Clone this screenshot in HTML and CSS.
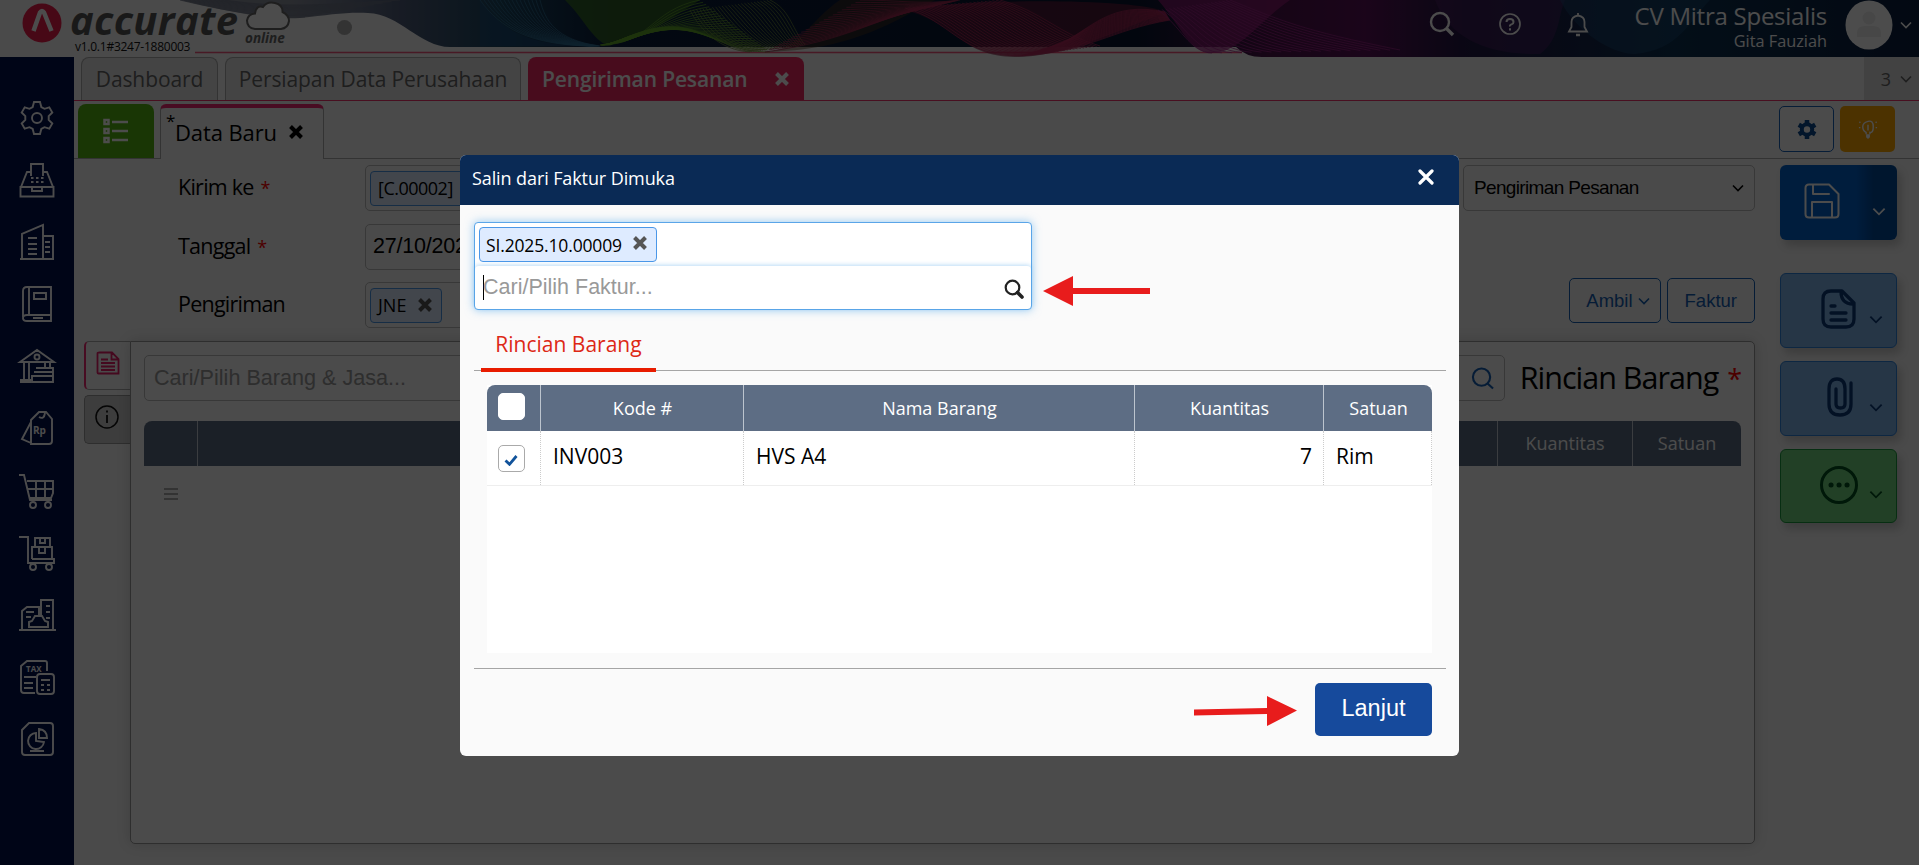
FILE: index.html
```html
<!DOCTYPE html>
<html lang="id">

<head>
  <meta charset="UTF-8" />
  <title>Accurate Online</title>
  <meta name="viewport" content="width=device-width, initial-scale=1.0" />
  <link rel="stylesheet" href="styles.css">
</head>

<body>
  <svg class="sprite" aria-hidden="true">
    <symbol id="i-x" viewBox="0 0 16 16"><path d="M2.5 2.5l11 11M13.5 2.5l-11 11" fill="none" stroke="currentColor" stroke-width="4" /></symbol>
    <symbol id="i-down" viewBox="0 0 12 8"><path d="M1 1.5l5 5 5-5" fill="none" stroke="currentColor" stroke-width="1.6" /></symbol>
  </svg>

  <header class="topbar">
    <svg class="banner" id="banner" viewBox="0 0 1919 57" preserveAspectRatio="none">
      <defs>
        <linearGradient id="sky" gradientUnits="userSpaceOnUse" x1="290" x2="1919" y1="0" y2="0">
          <stop offset="0" stop-color="#8b8f9c" />
          <stop offset=".07" stop-color="#4d5b78" />
          <stop offset=".13" stop-color="#1b4660" />
          <stop offset=".2" stop-color="#0a1c3c" />
          <stop offset=".52" stop-color="#081630" />
          <stop offset=".6" stop-color="#4a1148" />
          <stop offset=".66" stop-color="#5a1258" />
          <stop offset=".72" stop-color="#221743" />
          <stop offset=".85" stop-color="#0b3050" />
          <stop offset="1" stop-color="#0c1e3f" />
        </linearGradient>
      </defs>
      <path fill="url(#sky)" d="M180 0C230 12 270 20 300 18C330 15 345 12 368 13C400 14 420 47 450 47H1236Q1246 57 1262 57H1919V0z" />
      <path d="M195 52.5H1242" stroke="#f0567e" stroke-width="1.6" fill="none" />
      <path fill="#1b4b7a" opacity=".6" d="M480 0C500 30 530 46 590 46H480z" />
      <path fill="#3f7d1c" opacity=".65" d="M565 0C585 20 590 36 606 45C640 40 660 25 700 0z" />
      <path fill="#57361c" opacity=".45" d="M840 0C810 20 800 50 765 52C850 50 890 24 935 0z" />
      <path fill="#7a1b3e" opacity=".6" d="M905 10C960 25 960 56 1015 57C1060 57 1110 35 1165 12C1140 -2 960 -2 905 10z" />
      <path fill="#951c78" opacity=".7" d="M1158 0C1180 25 1190 53 1212 53C1240 53 1260 20 1290 0z" />
      <path fill="#5a2470" opacity=".4" d="M1435 0C1450 40 1490 55 1540 54C1560 40 1558 15 1565 0z" />
      <path fill="#1c4f7c" opacity=".45" d="M1560 0C1575 30 1610 54 1635 54C1680 50 1690 20 1710 0z" />
    </svg>

    <div class="brand">
      <svg class="brand-mark" viewBox="0 0 40 40">
        <circle cx="20" cy="20" r="19.5" fill="#ee1c4a" />
        <path d="M11.5 28L18 9.500q2-3 4 0L29.500 28" fill="none" stroke="#fff" stroke-width="4.500" />
      </svg>
      <div class="brand-name">accurate<div class="version">v1.0.1#3247-1880003</div></div>
      <div class="brand-cloud">
        <svg viewBox="0 0 46 30"><path d="M10 28Q2 27 2 19.500Q3 13 10 12.500Q11 4 18 6Q22 0 30 2Q38 4 37.500 11Q44 14 44 20Q43 27 36 28z" fill="#fff" stroke="#666" stroke-width="2" /></svg>
        <span>online</span>
      </div>
      <i class="dot"></i>
    </div>

    <div class="top-actions">
      <svg viewBox="0 0 26 26"><circle cx="11" cy="11" r="9" /><path d="M17.500 17.500L24 24" stroke-width="3.400" /></svg>
      <svg viewBox="0 0 26 26"><circle cx="13" cy="13" r="10" stroke-width="1.700" /><path d="M9.500 11Q9.500 8 13 8T16.500 11Q16.500 12.800 14.500 13.400T13 15.500M13 17.200v2.200" stroke-width="2" /></svg>
      <svg viewBox="0 0 26 26"><path d="M4 20.500h18L19.500 16V11Q19.500 5.500 13 4.500Q6.500 5.500 6.500 11v5zM13 2v3" stroke-width="1.800" /><path d="M11 24h4" stroke-width="2.500" /></svg>
    </div>
    <div class="account">
      <div class="company">CV Mitra Spesialis</div>
      <div class="user">Gita Fauziah</div>
    </div>
    <svg class="avatar" viewBox="0 0 48 50"><ellipse cx="24" cy="25" rx="23.500" ry="24.500" fill="#fff" /><circle cx="24" cy="18" r="6.500" fill="#eee" /><path d="M12 37V33Q12 26 20 26h8Q36 26 36 33v4z" fill="#eee" /></svg>
    <svg class="caret light"><use href="#i-down" /></svg>
  </header>

  <div class="shell">
    <nav class="sidebar">
      <!-- pengaturan -->
      <svg viewBox="0 0 36 36"><path d="M15 2h6l1.300 5 3.200 1.800 4.800-1.500 3 5.200-3.600 3.600v3.800l3.600 3.600-3 5.200-4.800-1.500-3.200 1.800L21 34h-6l-1.300-5-3.200-1.800-4.800 1.500-3-5.200 3.600-3.600v-3.800L2.700 12.500l3-5.200 4.800 1.500L13.700 7z" /><circle cx="18" cy="18" r="5" /></svg>
      <!-- kas -->
      <svg viewBox="0 0 36 36"><path d="M12 14V2h12v12M12 10H8L2 25h32L28 10h-4M1.500 25h33v9.500h-33zM13 25v4h10v-4" /><path d="M12 16h13M12 20h13" stroke-dasharray="2.500 2.500" /></svg>
      <!-- perusahaan -->
      <svg viewBox="0 0 36 36"><path d="M1 35h34M3 35V10L24 1v34M24 12h10v23M9 14h9M9 20h9M9 25h9M9 30h9M26 18h5M26 23h5M26 28h5" /></svg>
      <!-- buku besar -->
      <svg viewBox="0 0 36 36"><path d="M32 29V1H8Q4 1 4 5v26M10 1v28M32 29H8Q4 29 4 32T8 35h24zM15 7h12v6H15zM14 32h10" /></svg>
      <!-- bank -->
      <svg viewBox="0 0 36 36"><path d="M1 14L18 2l17 12zM5 15v17M10 15v17M26 15v5M31 15v5M1 34h11M1 32h11M17 20h17v5M15 24h19v5M13 28h21v6H13z" /><circle cx="18" cy="9" r="2.500" /></svg>
      <!-- penjualan -->
      <svg viewBox="0 0 36 36"><path d="M12 10L20 2h7l6 7v22q0 3-3 3H12zM12 12L3 29l9 4M20 7q5 3 6-4" /><text x="14" y="24">Rp</text></svg>
      <!-- pembelian -->
      <svg viewBox="0 0 36 36"><path d="M0 2h5l6 25h22M8 8h26v12l-2 5H11M8.500 16H34M17 8v17M26 8v17" /><circle cx="14" cy="32" r="3" /><circle cx="29" cy="32" r="3" /></svg>
      <!-- persediaan -->
      <svg viewBox="0 0 36 36"><path d="M0 2h9v26h26v-4H13M13 24V12h20v12M16 12V3h15v9M21 3v5h5V3M20 12v6h6v-6" /><circle cx="14" cy="32" r="3" /><circle cx="30" cy="32" r="3" /></svg>
      <!-- aset tetap -->
      <svg viewBox="0 0 36 36"><path d="M0 33h37M3 33V14l5-4h12v10M22 20V3h12v30M7 15h8M7 20h5M27 9h4M27 15h4M27 21h4" /><path d="M10 30v-5l3-1 3-5h7l3 5 3 1v5z" /></svg>
      <!-- pajak -->
      <svg viewBox="0 0 36 36"><path d="M16 34H5q-3 0-3-3V7l6-5h18q2 0 2 2v8M5 18h12M5 24h9M5 29h9" /><rect x="18" y="15" width="17" height="20" rx="3" /><path d="M22 21h9M22 26h3M28 26h3M22 31h3M28 31h3" /><text x="7" y="13" font-size="7">TAX</text></svg>
      <!-- laporan -->
      <svg viewBox="0 0 36 36"><path d="M10 2h21q3 0 3 3v26q0 3-3 3H6q-3 0-3-3V9zM11 30h14M17 12a8 8 0 1 0 8 9l-8-1zM20 8v9h8q0-8-8-9z" /></svg>
    </nav>

    <main class="main">
      <div class="tabs">
        <div class="tab">Dashboard</div>
        <div class="tab wide">Persiapan Data Perusahaan</div>
        <div class="tab active"><span>Pengiriman Pesanan</span><svg class="x"><use href="#i-x" /></svg></div>
        <div class="tab-count">3<svg class="caret"><use href="#i-down" /></svg></div>
      </div>

      <div class="subtabs">
        <button class="list-btn"><svg viewBox="0 0 26 26"><path d="M1.500 2h4v4h-4zM1.500 11h4v4h-4zM1.500 20h4v4h-4zM9 4h16M9 13h16M9 22h16" /></svg></button>
        <div class="subtab"><sup>*</sup><span>Data Baru</span><svg class="x"><use href="#i-x" /></svg></div>
        <div class="subtab-tools">
          <button class="tool"><svg viewBox="0 0 20 20"><circle cx="10" cy="10" r="5.200" fill="none" stroke="#0a4a92" stroke-width="4" /><path d="M10 .5v4M10 15.500v4M1.800 5.200l3.400 2M14.800 12.800l3.400 2M1.800 14.800l3.400-2M14.800 7.200l3.400-2" stroke="#0a4a92" stroke-width="4.500" /></svg></button>
          <button class="tool tip"><svg viewBox="0 0 20 22"><path d="M8 16v-2Q4.500 12 4.500 8T10 2.500T15.500 8T12 14v2M10 6v6M1 3l1 1M19 3l-1 1M.5 9h1.500M18 9h1.500" fill="none" stroke="#fff" stroke-width="1.500" /><path d="M8 16h4v3l-2 2-2-2z" fill="#fff" /></svg></button>
        </div>
      </div>

      <div class="content">
        <div class="form-side">
          <div class="form">
            <div class="fields">
              <label>Kirim ke <b>*</b></label>
              <div class="field"><span class="chip customer">[C.00002]</span></div>
              <label>Tanggal <b>*</b></label>
              <div class="field date">27/10/2025</div>
              <label>Pengiriman</label>
              <div class="field"><span class="chip">JNE <svg class="x"><use href="#i-x" /></svg></span></div>
            </div>
            <div class="form-right">
              <div class="select">Pengiriman Pesanan<svg class="caret"><use href="#i-down" /></svg></div>
              <div class="form-buttons">
                <button>Ambil<svg class="caret"><use href="#i-down" /></svg></button>
                <button class="faktur">Faktur</button>
              </div>
            </div>
          </div>

          <div class="detail">
            <div class="side-tabs">
              <div class="side-tab active"><svg viewBox="0 0 24 24"><path d="M3.500 1.500H16l6.500 6.500v14.500h-20q-1 0-1-1v-19q0-1 2-1zM15.500 2v6.500H22M5 8.500h7M5 12h14M5 15.500h14M5 19h14" /></svg></div>
              <div class="side-tab"><svg viewBox="0 0 24 24"><circle cx="12" cy="12" r="11" /><path d="M12 10v8M12 5.500v2" stroke-width="1.800" /></svg></div>
            </div>
            <div class="card">
              <div class="card-head">
                <div class="item-search">
                  <span>Cari/Pilih Barang &amp; Jasa...</span>
                  <svg viewBox="0 0 24 24"><circle cx="11" cy="10.500" r="9" /><path d="M17 17l6 5.500" /></svg>
                </div>
                <h2>Rincian Barang <b>*</b></h2>
              </div>
              <div class="items-head"><div></div><div></div><div>Kuantitas</div><div>Satuan</div></div>
              <div class="grip"><i></i><i></i><i></i></div>
            </div>
          </div>
        </div>

        <aside class="actions">
          <div class="action save">
            <svg class="icon" viewBox="0 0 36 36"><path d="M5 1.500h20L34.500 11v20q0 3.500-3.500 3.500H5q-3.500 0-3.500-3.500V5q0-3.500 3.500-3.500zM9 2v9h16M8 34V19h20v15" /></svg>
            <svg class="caret"><use href="#i-down" /></svg>
          </div>
          <div class="action">
            <svg class="icon" viewBox="0 0 36 40"><path d="M10 2h11l12 12v16q0 8-8 8H10q-8 0-8-8V10q0-8 8-8zM20 2.500Q20 15 32 15M10 17h4M10 24h15M10 31h15" /></svg>
            <svg class="caret"><use href="#i-down" /></svg>
          </div>
          <div class="action">
            <svg class="icon" viewBox="0 0 36 40"><path d="M30 6v21q0 11-11 11T8 27V12q0-10 8-10t8 10v15q0 4-4.500 4T15 27V12" /></svg>
            <svg class="caret"><use href="#i-down" /></svg>
          </div>
          <div class="action more">
            <svg class="icon" viewBox="0 0 40 40"><circle cx="20" cy="20" r="17.500" /><path d="M12 20h.1M20 20h.1M28 20h.1" stroke-width="5" /></svg>
            <svg class="caret"><use href="#i-down" /></svg>
          </div>
        </aside>
      </div>
    </main>
  </div>

  <div class="overlay">
    <div class="modal">
      <div class="modal-head">
        <span>Salin dari Faktur Dimuka</span>
        <svg viewBox="0 0 16 16"><path d="M2 2l12 12M14 2L2 14" stroke="#fff" stroke-width="3.200" stroke-linecap="round" /></svg>
      </div>
      <div class="modal-body">
        <div class="invoice-box">
          <div class="picked"><span class="chip">SI.2025.10.00009<svg class="x"><use href="#i-x" /></svg></span></div>
          <div class="invoice-search">
            <i class="cursor"></i><span>Cari/Pilih Faktur...</span>
            <svg viewBox="0 0 20 20"><circle cx="8.500" cy="8.500" r="6.800" stroke-width="2.200" /><path d="M13.500 13.500l4.500 4.500" stroke-width="3.600" stroke-linecap="round" /></svg>
          </div>
        </div>

        <div class="modal-tabs"><div class="modal-tab">Rincian Barang</div></div>

        <div class="grid">
          <div class="grid-row grid-head">
            <div><i class="check"></i></div>
            <div>Kode #</div>
            <div>Nama Barang</div>
            <div>Kuantitas</div>
            <div>Satuan</div>
          </div>
          <div class="grid-row">
            <div><i class="check"><svg viewBox="0 0 14 12"><path d="M1.500 6.500l4 3.800L12.500 2" fill="none" stroke="#11539b" stroke-width="2.800" /></svg></i></div>
            <div>INV003</div>
            <div>HVS A4</div>
            <div class="num">7</div>
            <div>Rim</div>
          </div>
        </div>

        <div class="modal-foot"><button class="next">Lanjut</button></div>
      </div>
      <svg class="arrow arrow-search" viewBox="0 0 107 30"><path d="M0 15L30 0V12H107V18H30V30z" /></svg>
      <svg class="arrow arrow-next" viewBox="0 0 103 30"><path d="M0 13.500L73 12V0L103 14.500L73 30V18L0 19.500z" /></svg>
    </div>
  </div>

  <script>
    // hairline ribbons of the header: each one fans from curve a to curve b
    const ribbons = [
      { color: '#6d7385', n: 12, a: [180, 0, 230, 12, 270, 18, 305, 17], b: [225, 0, 260, 5, 290, 8, 400, 0] },
      { color: '#2f6f96', n: 16, a: [480, 0, 500, 28, 530, 45, 590, 46], b: [540, 0, 545, 20, 555, 40, 600, 46] },
      { color: '#63a82b', n: 24, a: [600, 45, 650, 45, 650, 10, 700, 0], b: [610, 45, 700, 0, 700, 52, 770, 52] },
      { color: '#6f8a3c', n: 26, a: [690, 10, 700, 30, 720, 50, 750, 52], b: [770, 0, 790, 10, 790, 25, 805, 45] },
      { color: '#a02a52', n: 22, a: [765, 52, 850, 40, 870, 20, 925, 8], b: [860, 0, 900, 0, 920, 5, 960, 0] },
      { color: '#b0295a', n: 26, a: [905, 8, 950, 20, 960, 56, 1020, 56], b: [1000, 0, 1040, 10, 1060, 35, 1100, 46] },
      { color: '#b0295a', n: 22, a: [1060, 44, 1090, 30, 1110, 0, 1165, 12], b: [1020, 56, 1090, 52, 1110, 30, 1170, 20] },
      { color: '#a0248a', n: 20, a: [1158, 10, 1180, 25, 1190, 53, 1212, 53], b: [1230, 0, 1280, 20, 1300, 30, 1400, 50] },
    ];
    const banner = document.getElementById('banner');
    ribbons.forEach(r => {
      let d = '';
      for (let i = 0; i < r.n; i++) {
        const p = r.a.map((v, k) => (v + (r.b[k] - v) * i / (r.n - 1)).toFixed(1));
        d += `M${p[0]} ${p[1]}C${p.slice(2).join(' ')}`;
      }
      const path = document.createElementNS('http://www.w3.org/2000/svg', 'path');
      path.setAttribute('d', d);
      path.setAttribute('fill', 'none');
      path.setAttribute('stroke', r.color);
      path.setAttribute('stroke-width', '.9');
      path.setAttribute('opacity', '.8');
      banner.appendChild(path);
    });
  </script>
</body>

</html>
```

FILE: styles.css
```css
* {
  box-sizing: border-box;
}

body {
  margin: 0;
  height: 865px;
  overflow: hidden;
  background: #f7f7f7;
  color: #000;
  font-family: "Open Sans", "Noto Sans", sans-serif;
  font-size: 20px;
}

button {
  font-family: "Liberation Sans", Arial, sans-serif;
  cursor: pointer;
}

svg {
  display: block;
  flex: none;
}

.sprite {
  position: absolute;
  width: 0;
  height: 0;
}

.x {
  width: 16px;
  height: 16px;
}

.caret {
  width: 12px;
  height: 8px;
}

/* header */
.topbar {
  position: relative;
  display: flex;
  align-items: flex-start;
  height: 57px;
}

.banner {
  position: absolute;
  top: 0;
  left: 0;
  width: 100%;
  height: 57px;
}

.brand {
  position: relative;
  display: flex;
  flex: 1;
  padding-left: 22px;
}

.brand-mark {
  width: 40px;
  height: 40px;
  margin-top: 3px;
}

.brand-name {
  width: 174px;
  margin-left: 8px;
  color: #555;
  font-size: 40px;
  font-style: italic;
  font-weight: 700;
  line-height: 39px;
  letter-spacing: 0.3px;
}

.version {
  margin-left: 5px;
  color: #111;
  font-size: 12px;
  font-style: normal;
  font-weight: 400;
  line-height: 15px;
  letter-spacing: -0.25px;
}

.brand-cloud {
  width: 46px;
  margin-left: 1px;
  color: #666;
  font-size: 13.5px;
  font-style: italic;
  font-weight: 700;
  line-height: 15px;
}

.brand-cloud svg {
  width: 46px;
  height: 30px;
  margin-top: 1px;
}

.brand-cloud span {
  display: block;
}

.dot {
  width: 15px;
  height: 15px;
  margin: 20px 0 0 46px;
  border-radius: 50%;
  background: #aaa;
}

.top-actions {
  position: relative;
  display: flex;
  gap: 42px;
  margin: 11px 44px 0 0;
}

.top-actions svg {
  width: 26px;
  height: 26px;
  fill: none;
  stroke: #fff;
  stroke-width: 2.4;
}

.account {
  position: relative;
  color: #fff;
  text-align: right;
}

.company {
  font-size: 24px;
  line-height: 32px;
  letter-spacing: -0.25px;
}

.user {
  font-size: 16.3px;
  line-height: 18px;
}

.avatar {
  position: relative;
  width: 48px;
  height: 50px;
  margin-left: 18px;
}

.light {
  position: relative;
  margin: 21px 7px 0 7px;
  color: #fff;
}

/* shell */
.shell {
  display: flex;
  height: 808px;
}

.sidebar {
  display: flex;
  flex-direction: column;
  align-items: center;
  gap: 26.1px;
  width: 74px;
  padding-top: 43px;
  background: #00124f;
}

.sidebar svg {
  width: 36px;
  height: 36px;
  fill: none;
  stroke: #fff;
  stroke-width: 1.9;
  overflow: visible;
}

.sidebar text {
  fill: #fff;
  stroke: none;
  font-size: 10px;
  font-weight: 700;
}

.sidebar text[font-size] {
  font-size: 8px;
}

.main {
  flex: 1;
  min-width: 0;
}

.tabs {
  display: flex;
  align-items: stretch;
  height: 44px;
  padding-left: 7px;
  border-bottom: 1px solid #f0356c;
}

.tab {
  width: 137px;
  margin-right: 7px;
  border: 1px solid #aaa;
  border-bottom: 0;
  border-radius: 8px 8px 0 0;
  background: #e4e4e4;
  color: #666;
  font-size: 21px;
  line-height: 42px;
  letter-spacing: -0.1px;
  text-align: center;
}

.tab.wide {
  width: 296px;
}

.tab.active {
  display: flex;
  align-items: center;
  justify-content: space-between;
  width: 276px;
  padding: 1px 14px 0;
  border: 0;
  background: #f22a62;
  color: #fff;
  font-weight: 600;
  letter-spacing: -0.15px;
}

.tab-count {
  display: flex;
  align-items: center;
  justify-content: flex-end;
  gap: 9px;
  width: 55px;
  margin-left: auto;
  padding-right: 7px;
  background: #ddd;
  color: #666;
  font-size: 18px;
}

.subtabs {
  display: flex;
  height: 58px;
  padding: 3px 0 0 4px;
  border-bottom: 1px solid #aaa;
}

.list-btn {
  display: flex;
  align-items: center;
  justify-content: center;
  width: 76px;
  height: 54px;
  border: 0;
  border-radius: 8px 8px 0 0;
  background: #55b511;
}

.list-btn svg {
  width: 26px;
  height: 26px;
  fill: none;
  stroke: #fff;
  stroke-width: 2.5;
}

.subtab {
  display: flex;
  align-items: center;
  width: 164px;
  height: 55px;
  margin-left: 6px;
  padding: 0 0 3px 5px;
  border: 1px solid #aaa;
  border-top: 4px solid #f22a72;
  border-bottom: 0;
  border-radius: 6px 6px 0 0;
  background: #f7f7f7;
  font-size: 22px;
}

.subtab sup {
  align-self: flex-start;
  width: 9px;
  font-size: 17px;
  line-height: 25px;
}

.subtab span {
  width: 113px;
  letter-spacing: -0.1px;
}

.subtab-tools {
  display: flex;
  gap: 6px;
  margin: 2px 24px 0 auto;
}

.tool {
  display: flex;
  align-items: center;
  justify-content: center;
  width: 55px;
  height: 46px;
  border: 1px solid #1a62b8;
  border-radius: 5px;
  background: #fafafa;
}

.tool svg {
  width: 20px;
  height: 21px;
}

.tool.tip {
  border: 0;
  background: #ffa800;
}

/* form */
.content {
  display: flex;
  padding: 6px 22px 0 10px;
}

.form-side {
  width: 1671px;
}

.form {
  display: flex;
  justify-content: space-between;
}

.fields {
  display: grid;
  grid-template-columns: 187px 500px;
  grid-template-rows: 46px 46px 46px;
  row-gap: 12.5px;
  padding-left: 94px;
}

.fields label {
  font-size: 21.5px;
  line-height: 44px;
  letter-spacing: -0.75px;
}

b {
  color: #f00;
  font-weight: 400;
}

.fields b {
  margin-left: 2px;
  font-size: 18px;
}

.field {
  display: flex;
  align-items: center;
  padding-left: 4px;
  border: 1px solid #bbb;
  border-radius: 5px;
}

.date {
  padding-left: 7px;
  font-family: "Liberation Sans", Arial, sans-serif;
  font-size: 21.5px;
  letter-spacing: -0.2px;
}

.chip {
  display: flex;
  align-items: center;
  gap: 10px;
  height: 35px;
  padding: 0 8px 0 7px;
  border: 1px solid #4a97e8;
  border-radius: 4px;
  background: #deebff;
  font-size: 18px;
  white-space: nowrap;
}

.field .chip {
  gap: 11px;
}

.chip.customer {
  width: 260px;
  letter-spacing: -0.5px;
}

.chip .x {
  color: #555;
}

.form-right {
  display: flex;
  flex-direction: column;
  justify-content: space-between;
  width: 292px;
  height: 158px;
}

.select {
  display: flex;
  align-items: center;
  justify-content: space-between;
  height: 46px;
  padding: 0 10px;
  border: 1px solid #bbb;
  border-radius: 5px;
  font-family: "Liberation Sans", Arial, sans-serif;
  font-size: 19px;
  letter-spacing: -0.65px;
}

.form-buttons {
  display: flex;
  justify-content: flex-end;
  gap: 6px;
}

.form-buttons button {
  display: flex;
  align-items: center;
  gap: 5px;
  height: 45px;
  padding: 0 10px 0 16px;
  border: 1px solid #1560b4;
  border-radius: 5px;
  background: #f7f7f7;
  color: #1560b4;
  font-size: 18.5px;
}

.form-buttons .faktur {
  padding: 0 17px;
}

/* items card */
.detail {
  display: flex;
  margin-top: 13px;
}

.side-tabs {
  width: 46px;
}

.side-tab {
  display: flex;
  align-items: center;
  justify-content: center;
  height: 49px;
  margin-bottom: 5px;
  border: 1px solid #999;
  border-right: 0;
  border-radius: 5px 0 0 5px;
  background: #ccc;
}

.side-tab.active {
  border-color: #aaa;
  border-left: 2px solid #f22a72;
  background: #f9f9f9;
}

.side-tab svg {
  width: 24px;
  height: 24px;
  margin: -5px 1px 0 0;
  fill: none;
  stroke: #111;
  stroke-width: 1.5;
}

.side-tab.active svg {
  stroke: #e61e68;
  stroke-width: 1.8;
}

.card {
  width: 1625px;
  height: 503px;
  padding: 13px 13px 0 13px;
  border: 1px solid #999;
  border-radius: 0 5px 5px 5px;
  background: #fafafa;
  box-shadow: 0 0 14px rgba(0, 0, 0, 0.16);
}

.card-head {
  display: flex;
  justify-content: space-between;
  align-items: center;
}

.item-search {
  display: flex;
  align-items: center;
  justify-content: space-between;
  width: 1361px;
  height: 46px;
  padding: 0 10px 0 9px;
  border: 1px solid #bbb;
  border-radius: 5px;
  color: #999;
  font-family: "Liberation Sans", Arial, sans-serif;
  font-size: 21.6px;
}

.item-search svg {
  width: 23px;
  height: 23px;
  fill: none;
  stroke: #1560b4;
  stroke-width: 2.2;
}

.card h2 {
  margin: 0;
  font-size: 30.5px;
  font-weight: 400;
  line-height: 36px;
  letter-spacing: -1px;
}

.card h2 b {
  margin-left: 2px;
  font-size: 27px;
}

.items-head {
  display: grid;
  grid-template-columns: 53px 1300px 135px 1fr;
  height: 45px;
  margin-top: 20px;
  border-radius: 8px 8px 0 0;
  background: #5d6d84;
  color: #fff;
  font-size: 18px;
  line-height: 45px;
  text-align: center;
}

.items-head div + div {
  border-left: 1px solid #c5ccd6;
}

.grip {
  width: 14px;
  margin: 22px 0 0 20px;
}

.grip i {
  display: block;
  height: 2px;
  margin-bottom: 3px;
  background: #aaa;
}

/* action buttons */
.actions {
  margin-left: 25px;
}

.action {
  display: flex;
  align-items: center;
  justify-content: flex-end;
  gap: 12px;
  width: 117px;
  height: 75px;
  margin-bottom: 13px;
  padding-right: 13px;
  border: 1px solid #2d82dc;
  border-radius: 6px;
  background: #80b4ea;
  box-shadow: 4px 6px 8px rgba(0, 0, 0, 0.18);
  color: #0a3a7a;
}

.action .icon {
  width: 36px;
  height: 40px;
  margin-top: -3px;
  fill: none;
  stroke: currentColor;
  stroke-width: 3.3;
  stroke-linecap: round;
  stroke-linejoin: round;
}

.action .caret {
  width: 14px;
  height: 9px;
  margin-top: 17px;
}

.action.save {
  gap: 32px;
  margin-bottom: 33px;
  padding-right: 11px;
  border: 0;
  background: linear-gradient(90deg, #0062cc 65%, #004a9b 80%);
  color: #fff;
}

.save .icon {
  height: 36px;
  stroke-width: 2;
}

.action.more {
  gap: 10px;
  height: 74px;
  border-color: #1a9a3e;
  background: #74d880;
  color: #00501e;
}

.more .icon {
  width: 40px;
  stroke-width: 3;
}

/* modal */
.overlay {
  position: fixed;
  inset: 0;
  background: rgba(0, 0, 0, 0.7);
}

.modal {
  position: absolute;
  top: 155px;
  left: 460px;
  width: 999px;
  height: 601px;
  border-radius: 6px;
  background: #fafafa;
}

.modal-head {
  display: flex;
  align-items: center;
  justify-content: space-between;
  height: 50px;
  padding: 0 25px 4px 12px;
  border-radius: 6px 6px 0 0;
  background: #0a2a55;
  color: #fff;
  font-size: 18px;
  letter-spacing: -0.1px;
}

.modal-head svg {
  width: 16px;
  height: 16px;
  margin-top: -3px;
}

.modal-body {
  padding: 17px 13px 0 14px;
}

.invoice-box {
  width: 558px;
  height: 88px;
  border: 1px solid #5aa5e8;
  border-radius: 4px;
  background: #fff;
  box-shadow: 0 0 10px rgba(82, 168, 236, 0.6);
}

.picked {
  display: flex;
  height: 43px;
  padding: 4px;
}

.picked .chip {
  gap: 10px;
  padding-left: 6px;
  font-size: 17.5px;
  letter-spacing: -0.15px;
}

.picked .x {
  margin-top: -4px;
}

.invoice-search {
  display: flex;
  align-items: center;
  height: 43px;
  padding: 0 7px 0 8px;
  border-radius: 4px;
  box-shadow: 0 -1px 4px rgba(82, 168, 236, 0.4);
  color: #999;
  font-family: "Liberation Sans", Arial, sans-serif;
  font-size: 21.5px;
}

.cursor {
  width: 1px;
  height: 25px;
  margin-right: -1px;
  background: #000;
}

.invoice-search svg {
  width: 20px;
  height: 20px;
  margin: 3px 0 0 auto;
  fill: none;
  stroke: #222;
}

.modal-tabs {
  display: flex;
  height: 61px;
  padding-left: 7px;
  border-bottom: 1px solid #a5a5a5;
}

.modal-tab {
  height: 62px;
  width: 175px;
  border-bottom: 4px solid #e81c00;
  color: #dd2815;
  font-size: 21px;
  line-height: 69px;
  text-align: center;
}

.grid {
  width: 945px;
  height: 268px;
  margin: 14px 0 0 13px;
  background: #fff;
}

.grid-row {
  display: grid;
  grid-template-columns: 54px 203px 391px 189px 108px;
  height: 55px;
  border-bottom: 1px solid #eee;
  font-size: 21px;
  line-height: 50px;
}

.grid-row div {
  padding: 0 11px 0 12px;
  border-right: 1px dotted #ccc;
}

.grid-row div:first-child {
  padding: 14px 0 0 11px;
}

.grid-row .num {
  text-align: right;
}

.grid-row.grid-head {
  height: 46px;
  border: 0;
  border-radius: 8px 8px 0 0;
  background: #5d6d84;
  color: #fff;
  font-size: 18px;
  line-height: 47px;
  text-align: center;
}

.grid-head div {
  border-right: 1px solid #bcc4ce;
}

.grid-head div:first-child {
  padding-top: 8px;
}

.grid-head div:last-child {
  border: 0;
}

.check {
  display: flex;
  align-items: center;
  justify-content: center;
  width: 27px;
  height: 27px;
  border: 1px solid #aaa;
  border-radius: 5px;
  background: #fff;
}

.grid-head .check {
  border-color: #fff;
}

.check svg {
  width: 14px;
  height: 12px;
  margin: 3px 1px 0 0;
}

.modal-foot {
  display: flex;
  justify-content: flex-end;
  margin-top: 15px;
  padding: 14px 14px 0 0;
  border-top: 1px solid #a5a5a5;
}

.next {
  width: 117px;
  height: 53px;
  padding: 0 0 3px;
  border: 0;
  border-radius: 5px;
  background: #164a9c;
  color: #fff;
  font-size: 23.5px;
}

.arrow {
  position: absolute;
  fill: #e81c1c;
}

.arrow-search {
  top: 121px;
  left: 583px;
  width: 107px;
  height: 30px;
}

.arrow-next {
  top: 541px;
  left: 734px;
  width: 103px;
  height: 30px;
}
```
